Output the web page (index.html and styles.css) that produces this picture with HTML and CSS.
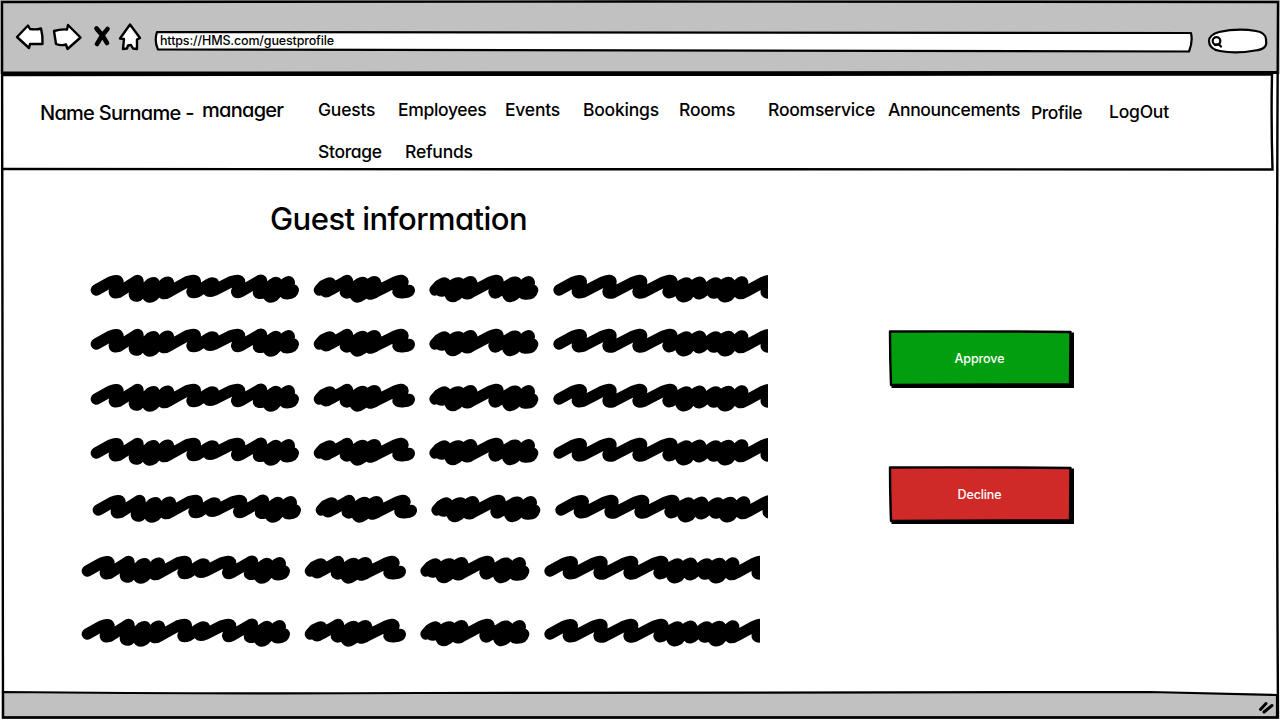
FILE: index.html
```html
<!DOCTYPE html>
<html lang="en">
<head>
<meta charset="utf-8">
<title>Guest information</title>
<link rel="stylesheet" href="styles.css">
</head>
<body>
<div class="browser">
  <header class="chrome">
    <svg class="controls" width="144" height="32" viewBox="0 0 144 32">
      <path class="icon" d="M17 17 L28 5.500 L30 9 Q36 10 41 8.500 Q43 16 42.500 24 L30 24 L29 28 Z"/>
      <path class="icon" d="M54 11 Q60 9 67 9.500 L68 5 L80.500 17.500 L67.500 29 L66 24.500 Q61 26 56 24 Z"/>
      <path class="cross" d="M96.500 8.500 Q103 15 107 23 M107.500 9 Q101 16 97 24"/>
      <path class="icon" d="M130 4.500 L140 18 L137 19.500 L137 29 L133 28.500 L131 25 L128 25.500 L127 28.500 L123 29 L124 19 L120 18.500 Z"/>
    </svg>
    <div class="address"><svg class="shape" width="1042" height="26" viewBox="0 0 1042 26"><path class="line" d="M5 4 Q520 3 1039 5 Q1041 14 1037 23.500 Q520 22 6 21.500 Q2 13 5 4Z"/></svg><span>https://HMS.com/guestprofile</span></div>
    <svg class="search" width="64" height="28" viewBox="0 0 64 28">
      <path class="line" d="M13 5 Q32 1 50 4 Q61 6 60 14 Q62 22 49 23.500 Q30 27 14 24 Q3 22 3 14 Q3 8 13 5Z"/>
      <circle class="glass" cx="10.500" cy="14" r="3.800"/><path class="glass" d="M9 18 Q13 16 15 19.500"/>
    </svg>
  </header>
  <nav class="topbar">
    <div class="user"><span class="name">Name Surname -</span><span class="role">manager</span></div>
    <div class="links">
      <div class="row first"><a class="l1">Guests</a><a class="l2">Employees</a><a class="l3">Events</a><a class="l4">Bookings</a><a class="l5">Rooms</a><a class="l6">Roomservice</a><a class="l7">Announcements</a><a class="l8">Profile</a><a class="l9">LogOut</a></div>
      <div class="row second"><a class="l10">Storage</a><a class="l11">Refunds</a></div>
    </div>
  </nav>
  <main class="content">
    <section class="guest">
      <h1>Guest information</h1>
      <svg class="defs" width="0" height="0"><defs><g id="scribble">
        <path d="M49 75 L92 51 Q112 43 114 50 Q115 56 103 80 Q102 86 116 82 L166 50 Q175 42 174 52 L163 88 Q164 96 174 92 L212 56 Q222 50 223 56 L203 92 Q207 100 220 92 L256 54 Q265 48 266 56 L246 82 Q252 90 268 80 L322 50 Q346 42 346 50 Q346 58 336 80 Q338 86 352 80 L386 58 Q400 50 401 58 L384 76 Q388 82 402 76 L454 50 Q479 42 479 51 Q478 62 470 80 Q472 86 482 80 L534 50 Q545 40 545 51 L536 80 Q534 88 546 84 L580 56 Q589 48 590 56 L566 92 Q570 100 582 92 L618 54 Q628 46 628 54 L622 80 L640 75 Q638 88 616 86"/>
        <path transform="translate(660)" d="M58 75 L70 62 Q90 50 92 56 L72 76 Q78 84 92 74 L132 52 Q143 42 143 50 L136 82 Q142 88 150 76 L178 56 Q191 48 192 56 L166 92 Q172 100 186 90 L214 54 Q226 46 227 54 L206 84 Q212 92 228 80 L284 52 Q308 42 309 50 Q308 62 294 78 Q292 85 312 83 Q326 82 328 76"/>
        <path transform="translate(660)" d="M405 75 L417 62 Q434 50 436 56 L418 74 Q424 84 440 72 L466 56 Q479 50 480 58 L451 90 Q456 100 470 90 L502 54 Q515 46 515 54 L494 82 Q500 92 516 80 L570 52 Q594 42 594 50 Q594 62 582 80 Q584 88 594 80 L636 54 Q649 48 649 56 L624 90 Q630 100 642 90 L678 54 Q688 46 688 54 L672 84 L698 75 Q694 90 672 87"/>
        <path transform="translate(1395)" d="M42 75 L86 51 Q108 43 109 50 Q110 58 97 80 Q96 86 114 82 L172 52 Q198 42 198 50 Q198 60 189 80 Q190 88 206 82 L264 52 Q290 42 290 50 Q290 60 279 80 Q280 87 296 82 L354 52 Q380 42 381 50 Q380 62 369 80 Q372 87 384 78 L414 58 Q428 50 428 58 L408 90 Q412 100 426 92 L454 56 Q467 48 467 55 L456 82 Q462 92 474 80 L502 58 Q516 50 516 58 L500 80 Q506 90 518 78 L540 56 Q554 48 554 56 L532 90 Q538 100 550 92 L582 56 Q593 46 593 54 L580 82 Q586 90 602 80 L656 51 Q680 42 681 50 Q676 66 664 78 Q662 85 675 84"/>
      </g></defs></svg>
      <svg class="entry" viewBox="0 0 2064 135"><use href="#scribble"/></svg>
      <svg class="entry e2" viewBox="0 0 2064 135"><use href="#scribble"/></svg>
      <svg class="entry e3" viewBox="0 0 2064 135"><use href="#scribble"/></svg>
      <svg class="entry e4" viewBox="0 0 2064 135"><use href="#scribble"/></svg>
      <svg class="entry e5" viewBox="0 0 2058 135"><use href="#scribble"/></svg>
      <svg class="entry e6" viewBox="0 0 2067 135"><use href="#scribble"/></svg>
      <svg class="entry e7" viewBox="0 0 2067 135"><use href="#scribble"/></svg>
    </section>
    <aside class="actions">
      <button class="approve"><svg class="shape" width="187" height="60" viewBox="0 0 187 60"><path class="shadow" d="M183 3.500 L187 3.500 L187 59 L4.500 59 L4.500 55Z"/><path class="face" d="M3 2.500 Q90 2 183.500 3 L183 55.500 Q90 55 4 56 Q3 30 3 2.500Z"/></svg><span>Approve</span></button>
      <button class="decline"><svg class="shape" width="187" height="60" viewBox="0 0 187 60"><path class="shadow" d="M183 3.500 L187 3.500 L187 59 L4.500 59 L4.500 55Z"/><path class="face" d="M3 2.500 Q90 2 183.500 3 L183 55.500 Q90 55 4 56 Q3 30 3 2.500Z"/></svg><span>Decline</span></button>
    </aside>
  </main>
  <footer class="status"><svg width="1280" height="30" viewBox="0 0 1280 30"><path class="bar" d="M3 2 Q200 4 420 3 Q900 1.500 1150 2 L1277 5 L1277 27.500 L3 27.500Z"/><path class="grip" d="M1260.500 19.500 L1266 13.500 M1264 22 L1272 15.500"/></svg></footer>
  <svg class="outline" width="1280" height="720" viewBox="0 0 1280 720">
    <path d="M2 2 Q640 1 1278 2 Q1276 360 1278 717.500 Q640 718.500 3 717.500 Q4 360 2 2Z"/>
    <path class="divider" d="M2 73 L1278 72.500"/>
    <path class="nav-line" d="M2 75 L1272 74.500 Q1271 120 1272.500 169.500 Q640 170 2 169"/>
  </svg>
</div>
</body>
</html>
```
FILE: styles.css
```css
* { box-sizing: border-box; }
body { margin: 0; width: 1280px; height: 720px; overflow: hidden; background: #fff; color: #000; font-family: Inter, "Liberation Sans", sans-serif; font-feature-settings: "cv11"; }
.browser { position: relative; width: 1280px; height: 720px; display: flex; flex-direction: column; }
.chrome { height: 74px; flex: none; background: #c1c1c1; display: flex; align-items: flex-start; padding-top: 20px; }
.controls { flex: none; }
.icon { fill: #fff; stroke: #000; stroke-width: 2.4; stroke-linejoin: round; }
.cross { fill: none; stroke: #000; stroke-width: 4.6; stroke-linecap: round; }
.line { fill: #fff; stroke: #000; stroke-width: 2.2; stroke-linejoin: round; }
.glass { fill: none; stroke: #000; stroke-width: 2.2; stroke-linecap: round; }
.address { position: relative; width: 1042px; height: 26px; margin: 8px 0 0 8px; padding-left: 8px; font-size: 12.5px; line-height: 25px; font-weight: 500; letter-spacing: -.15px; }
.address span, button span { position: relative; }
.shape { position: absolute; left: 0; top: 0; }
.search { margin: 7px 0 0 12px; }
.topbar { height: 96px; flex: none; display: flex; font-weight: 500; }
.user { width: 318px; display: flex; padding: 25px 0 0 40px; font-size: 20px; line-height: 28px; white-space: nowrap; letter-spacing: -.72px; }
.name { width: 162px; }
.role { margin-top: -3px; }
.links { padding-top: 24px; font-size: 17.5px; line-height: 24px; letter-spacing: -.22px; }
.row { display: flex; white-space: nowrap; }
.row a { flex: none; }
.second { margin-top: 18px; }
.l1 { width: 80px; }
.l2 { width: 107px; letter-spacing: -.32px; }
.l3 { width: 78px; }
.l4 { width: 96px; }
.l5 { width: 89px; }
.l6 { width: 120px; }
.l7 { width: 143px; letter-spacing: -.38px; }
.l8 { width: 78px; position: relative; top: 3px; letter-spacing: -.4px; }
.l9 { position: relative; top: 2px; }
.l10 { width: 87px; letter-spacing: -.32px; }
.content { height: 520px; flex: none; display: flex; }
.guest { width: 887px; padding: 29px 0 0 80px; display: flex; flex-direction: column; align-items: flex-start; }
h1 { margin: 0 0 26px 190px; font-size: 31px; font-weight: 500; line-height: 40px; white-space: nowrap; letter-spacing: -.55px; }
.defs { position: absolute; }
#scribble { fill: none; stroke: #000; stroke-width: 34; stroke-linecap: round; stroke-linejoin: round; }
.entry { display: block; width: 688px; height: 45px; flex: none; }
.e2, .e4 { margin-top: 9px; }
.e3 { margin-top: 10px; }
.e5 { width: 686px; margin: 12px 0 0 2px; }
.e6 { width: 689px; margin: 16px 0 0 -9px; }
.e7 { width: 689px; margin: 18px 0 0 -9px; }
.actions { padding-top: 159px; display: flex; flex-direction: column; gap: 76px; }
button { position: relative; width: 187px; height: 60px; border: 0; padding: 0 2px 2px 0; background: none; color: #fff; font: 500 12.5px Inter, "Liberation Sans", sans-serif; letter-spacing: -.1px; }
.face { stroke: #000; stroke-width: 2.4; stroke-linejoin: round; }
.approve .face { fill: #029e0f; }
.decline .face { fill: #cf2a27; }
.status { height: 30px; flex: none; }
.status svg { display: block; }
.bar { fill: #c1c1c1; stroke: #000; stroke-width: 2.2; }
.grip { stroke: #000; stroke-width: 3; stroke-linecap: round; }
.outline { position: absolute; inset: 0; fill: none; stroke: #000; stroke-width: 2.4; pointer-events: none; }
.divider { stroke-width: 3; }
```
